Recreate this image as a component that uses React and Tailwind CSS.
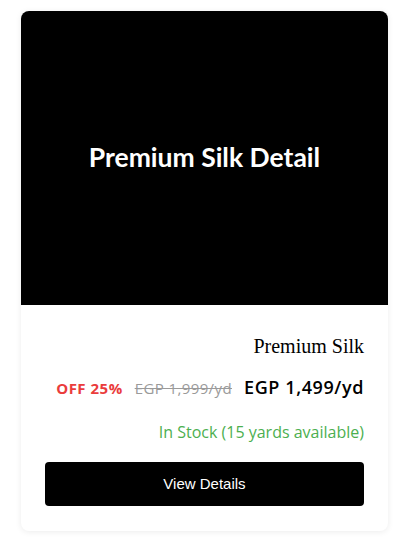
export default function App() {
  return (
    <div className="min-h-[541px] bg-white p-5 pt-[11px]" style={{ paddingLeft: 21, paddingRight: 29 }}>
      <div className="w-[367px] overflow-hidden rounded-lg bg-white shadow-[0_1px_6px_rgba(0,0,0,0.08)]">
        <div className="flex h-[294px] items-center justify-center bg-black">
          <h2 className="font-['Lato',sans-serif] text-[26.5px] font-bold text-white">Premium Silk Detail</h2>
        </div>
        <div className="flex flex-col items-end px-6 pt-[27px] pb-[25px] font-['Open_Sans',sans-serif]">
          <h3 className="font-['Liberation_Serif',serif] text-[20px] leading-7 text-black">Premium Silk</h3>
          <div className="mt-[14px] flex items-baseline gap-3">
            <span className="text-[15px] font-bold tracking-[0.5px] text-[#ea3c3c]">OFF 25%</span>
            <span className="text-[15px] tracking-[0.4px] text-[#9a9a9a] line-through">EGP 1,999/yd</span>
            <span className="text-[18px] font-semibold tracking-[0.6px] text-black">EGP 1,499/yd</span>
          </div>
          <p className="mt-[19px] text-[16px] text-[#4caf50]">In Stock (15 yards available)</p>
          <button className="mt-[18px] h-[44px] w-full rounded bg-black font-['Liberation_Sans',sans-serif] text-[15px] text-white">
            View Details
          </button>
        </div>
      </div>
    </div>
  );
}
